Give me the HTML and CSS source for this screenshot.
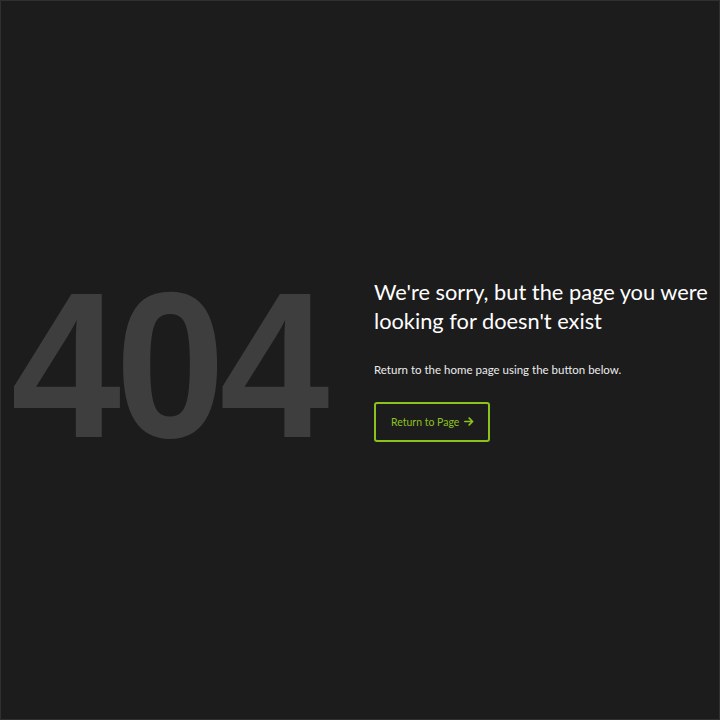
FILE: index.html
```html
<!DOCTYPE html>
<html lang="en">
<head>
<meta charset="utf-8">
<title>404</title>
<link rel="stylesheet" href="styles.css">
</head>
<body>
<main class="page">
  <div class="code">404</div>
  <div class="info">
    <h1 class="title">We're sorry, but the page you were looking for doesn't exist</h1>
    <p class="text">Return to the home page using the button below.</p>
    <a class="btn" href="#">Return to Page <span class="arrow">
      <svg width="10" height="9" viewBox="0 0 10 9"><path d="M0.8 4.5H8.6M5.2 1.2L8.6 4.5L5.2 7.8" fill="none" stroke="currentColor" stroke-width="1.7" stroke-linecap="round" stroke-linejoin="round"/></svg>
    </span></a>
  </div>
</main>
</body>
</html>
```

FILE: styles.css
```css
html, body {
  margin: 0;
  padding: 0;
  background: #1c1c1c;
}
body {
  width: 720px;
  height: 720px;
  box-sizing: border-box;
  border: 1px solid #303030;
  overflow: hidden;
}
.page {
  height: 100%;
  display: flex;
  align-items: center;
  padding-left: 10px;
  box-sizing: border-box;
}
.code {
  font-family: "Liberation Sans", Arial, sans-serif;
  font-weight: 700;
  font-size: 207px;
  line-height: 1;
  color: #3e3e3e;
  letter-spacing: -6px;
  width: 363px;
  flex: none;
  margin-top: 10px;
  transform: scaleX(0.955);
  transform-origin: 0 50%;
}
.info {
  width: 345px;
  flex: none;
  color: #fff;
  margin-top: -2px;
}
.title {
  font-family: Lato, "Noto Sans", sans-serif;
  font-weight: 400;
  font-size: 21.8px;
  line-height: 29px;
  margin: 0 0 28px;
}
.text {
  font-family: Lato, "Noto Sans", sans-serif;
  font-size: 11.5px;
  color: #ececec;
  margin: 0 0 26px;
}
.btn {
  display: inline-flex;
  align-items: center;
  gap: 5px;
  height: 40px;
  padding: 0 14px 0 15px;
  box-sizing: border-box;
  border: 2px solid #8cc21c;
  border-radius: 3px;
  color: #8cc21c;
  font-family: Lato, "Noto Sans", sans-serif;
  font-size: 10.5px;
  text-decoration: none;
}
.arrow {
  display: inline-flex;
}
```
